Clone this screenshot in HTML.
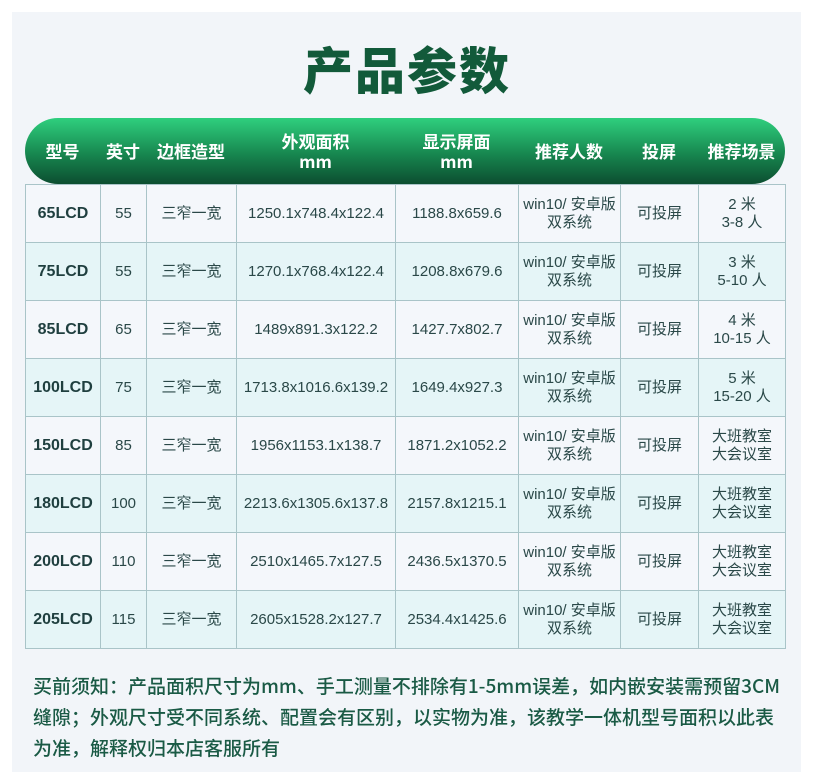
<!DOCTYPE html>
<html><head><meta charset="utf-8"><style>
*{margin:0;padding:0;box-sizing:border-box}
body{width:814px;height:757px;background:#fff;font-family:"Liberation Sans","Noto Sans CJK SC",sans-serif;overflow:hidden;position:relative}
.panel{position:absolute;left:12px;top:12px;width:789px;height:760px;background:#f2f5f9}
h1{position:absolute;left:0;width:814px;top:32px;text-align:center;font-size:50px;font-weight:900;color:#125a3a;letter-spacing:2px;font-family:"Noto Sans CJK SC",sans-serif}
.head{position:absolute;left:25px;top:118px;width:760px;height:66px;border-radius:33px;background:linear-gradient(#2fcf7e,#17864f 55%,#0c4e30);color:#fff;font-family:"Noto Sans CJK SC",sans-serif;font-weight:700;font-size:17px}
.head div{position:absolute;top:0;height:66px;display:flex;align-items:center;justify-content:center;text-align:center;line-height:20px}
table{position:absolute;left:25px;top:184px;border-collapse:collapse;table-layout:fixed}
td{border:1px solid #a9c4c8;height:58px;text-align:center;vertical-align:middle;font-size:15px;color:#2a4848;line-height:18px;white-space:nowrap;padding:0}
tr:nth-child(odd) td{background:#f4f7fb}
tr:nth-child(even) td{background:#e5f5f7}
td.m{font-weight:bold;font-size:16px;color:#1f3f3f}
.note{position:absolute;left:33px;top:670px;font-size:19px;line-height:31px;color:#1a5a45;white-space:nowrap;font-weight:500;font-family:"Noto Sans CJK SC",sans-serif}
</style></head><body>
<div class="panel"></div>
<h1>产品参数</h1>
<table>
<colgroup><col style="width:75px"><col style="width:46px"><col style="width:90px"><col style="width:159px"><col style="width:123px"><col style="width:102px"><col style="width:78px"><col style="width:87px"></colgroup>
<tr><td class="m">65LCD</td><td>55</td><td>三窄一宽</td><td>1250.1x748.4x122.4</td><td>1188.8x659.6</td><td>win10/ 安卓版<br>双系统</td><td>可投屏</td><td>2 米<br>3-8 人</td></tr>
<tr><td class="m">75LCD</td><td>55</td><td>三窄一宽</td><td>1270.1x768.4x122.4</td><td>1208.8x679.6</td><td>win10/ 安卓版<br>双系统</td><td>可投屏</td><td>3 米<br>5-10 人</td></tr>
<tr><td class="m">85LCD</td><td>65</td><td>三窄一宽</td><td>1489x891.3x122.2</td><td>1427.7x802.7</td><td>win10/ 安卓版<br>双系统</td><td>可投屏</td><td>4 米<br>10-15 人</td></tr>
<tr><td class="m">100LCD</td><td>75</td><td>三窄一宽</td><td>1713.8x1016.6x139.2</td><td>1649.4x927.3</td><td>win10/ 安卓版<br>双系统</td><td>可投屏</td><td>5 米<br>15-20 人</td></tr>
<tr><td class="m">150LCD</td><td>85</td><td>三窄一宽</td><td>1956x1153.1x138.7</td><td>1871.2x1052.2</td><td>win10/ 安卓版<br>双系统</td><td>可投屏</td><td>大班教室<br>大会议室</td></tr>
<tr><td class="m">180LCD</td><td>100</td><td>三窄一宽</td><td>2213.6x1305.6x137.8</td><td>2157.8x1215.1</td><td>win10/ 安卓版<br>双系统</td><td>可投屏</td><td>大班教室<br>大会议室</td></tr>
<tr><td class="m">200LCD</td><td>110</td><td>三窄一宽</td><td>2510x1465.7x127.5</td><td>2436.5x1370.5</td><td>win10/ 安卓版<br>双系统</td><td>可投屏</td><td>大班教室<br>大会议室</td></tr>
<tr><td class="m">205LCD</td><td>115</td><td>三窄一宽</td><td>2605x1528.2x127.7</td><td>2534.4x1425.6</td><td>win10/ 安卓版<br>双系统</td><td>可投屏</td><td>大班教室<br>大会议室</td></tr>
</table>
<div class="head">
<div style="left:0;width:75px">型号</div>
<div style="left:75px;width:46px">英寸</div>
<div style="left:121px;width:90px">边框造型</div>
<div style="left:211px;width:159px">外观面积<br>mm</div>
<div style="left:370px;width:123px">显示屏面<br>mm</div>
<div style="left:493px;width:102px">推荐人数</div>
<div style="left:595px;width:78px">投屏</div>
<div style="left:673px;width:87px">推荐场景</div>
</div>
<div class="note">买前须知：产品面积尺寸为mm、手工测量不排除有1-5mm误差，如内嵌安装需预留3CM<br>缝隙；外观尺寸受不同系统、配置会有区别，以实物为准，该教学一体机型号面积以此表<br>为准，解释权归本店客服所有</div>
</body></html>
